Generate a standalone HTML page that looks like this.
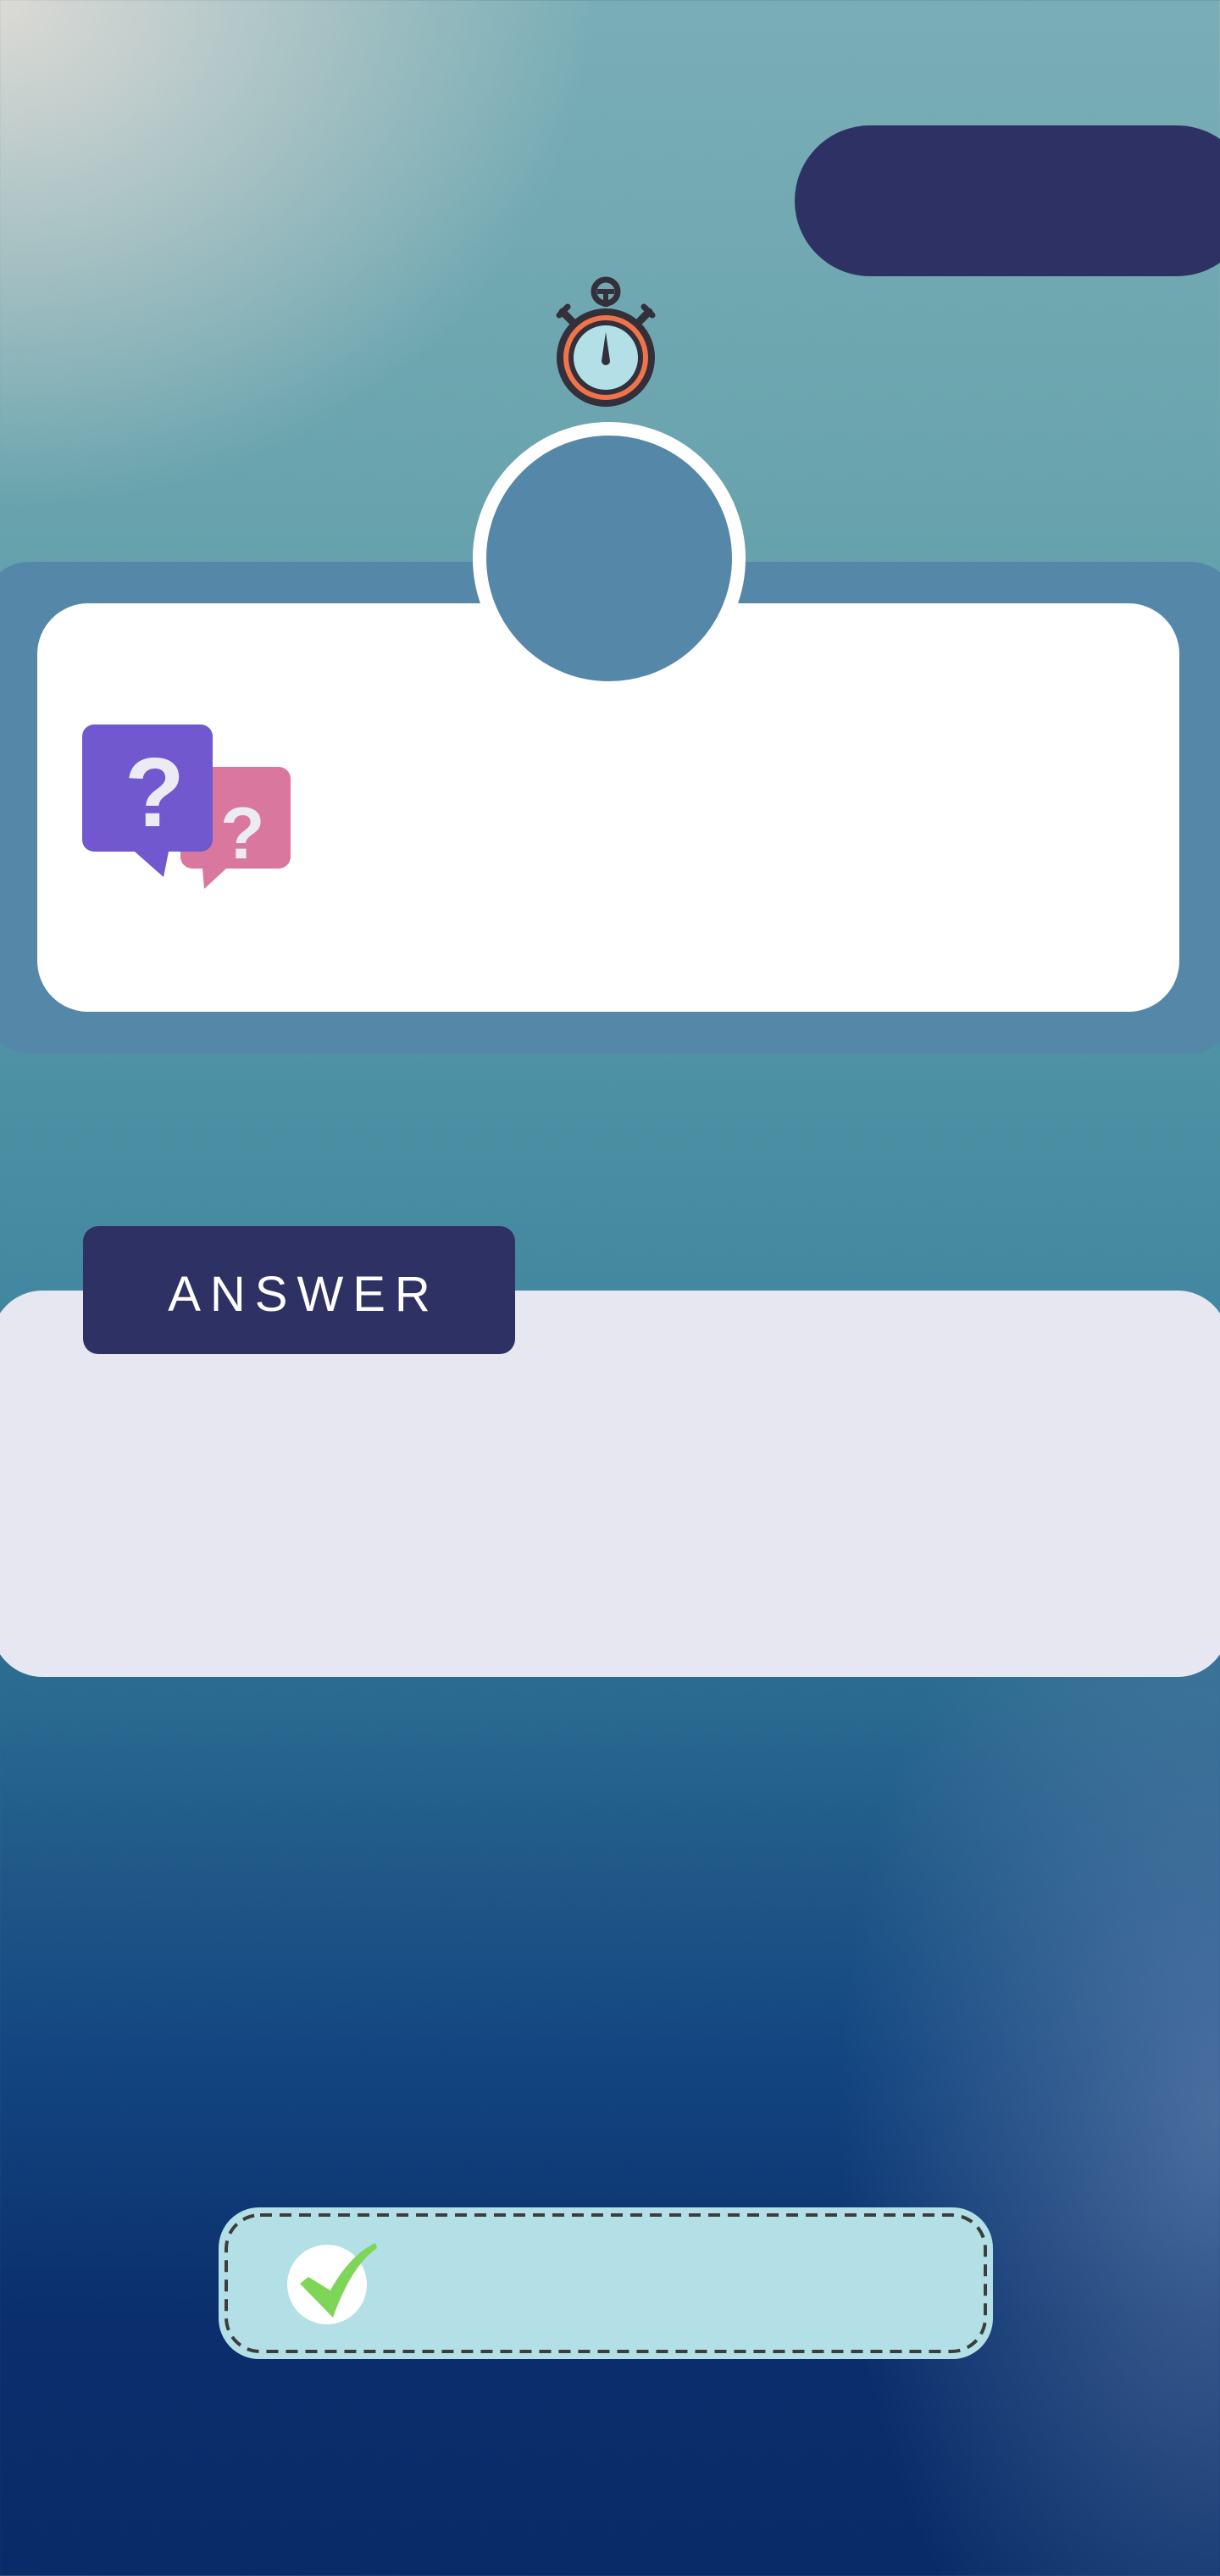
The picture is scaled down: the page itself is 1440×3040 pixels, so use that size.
<!DOCTYPE html>
<html><head><meta charset="utf-8"><style>
html,body{margin:0;padding:0}
body{width:1440px;height:3040px;position:relative;overflow:hidden;font-family:"Liberation Sans",sans-serif;
background:
radial-gradient(ellipse 700px 600px at 0px 0px, rgba(225,220,215,0.95), rgba(225,220,215,0) 100%),
radial-gradient(ellipse 450px 800px at 1440px 2500px, rgba(110,140,180,0.6), rgba(110,140,180,0) 100%),
linear-gradient(180deg,#7aaeb6 0%,#6aa4ae 18%,#5598a7 35%,#4388a0 50%,#2a6a90 66%,#134580 80%,#0a2f6c 90%,#092c68 100%);}
.a{position:absolute}
</style></head><body>
<div class="a" style="left:938px;top:148px;width:540px;height:178px;border-radius:89px;background:#2e3163"></div>
<svg class="a" style="left:650px;top:326px" width="130" height="160" viewBox="0 0 130 160">
<circle cx="65" cy="18" r="14" fill="none" stroke="#33303b" stroke-width="7"/>
<rect x="55" y="15" width="20" height="6" fill="#33303b"/><rect x="62" y="18" width="6" height="18" fill="#33303b"/>
<line x1="14" y1="42" x2="28" y2="56" stroke="#33303b" stroke-width="9" stroke-linecap="round"/>
<line x1="116" y1="42" x2="102" y2="56" stroke="#33303b" stroke-width="9" stroke-linecap="round"/>
<line x1="10" y1="46" x2="20" y2="36" stroke="#33303b" stroke-width="7" stroke-linecap="round"/>
<line x1="120" y1="46" x2="110" y2="36" stroke="#33303b" stroke-width="7" stroke-linecap="round"/>
<circle cx="65" cy="96" r="58" fill="#33303b"/>
<circle cx="65" cy="96" r="47" fill="none" stroke="#f0734a" stroke-width="6"/>
<circle cx="65" cy="96" r="38" fill="#b2e0e6"/>
<path d="M65 66 L70 100 A5 5 0 0 1 60 100 Z" fill="#33303b"/>
</svg>
<div class="a" style="left:-20px;top:663px;width:1480px;height:580px;border-radius:55px;background:#5587a8"></div>
<div class="a" style="left:44px;top:712px;width:1348px;height:482px;border-radius:60px;background:#fff"></div>
<div class="a" style="left:558px;top:498px;width:290px;height:290px;border-radius:50%;background:#5587a8;border:16px solid #fff"></div>
<svg class="a" style="left:97px;top:855px" width="260" height="200" viewBox="0 0 260 200">
<path d="M130 50 h102 a14 14 0 0 1 14 14 v92 a14 14 0 0 1 -14 14 h-62 l-26 24 l-2 -24 h-12 a14 14 0 0 1 -14 -14 v-92 a14 14 0 0 1 14 -14z" fill="#d9779e"/>
<text x="163" y="158" font-size="86" font-weight="bold" fill="#ecebf3" font-family="Liberation Sans">?</text>
<path d="M14 0 h126 a14 14 0 0 1 14 14 v122 a14 14 0 0 1 -14 14 h-38 l-6 30 l-34 -30 h-48 a14 14 0 0 1 -14 -14 v-122 a14 14 0 0 1 14 -14z" fill="#7158cf"/>
<text x="50" y="120" font-size="116" font-weight="bold" fill="#ecebf3" font-family="Liberation Sans">?</text>
</svg>
<div class="a" style="left:-10px;top:1523px;width:1460px;height:456px;border-radius:60px;background:#e6e7f1"></div>
<div class="a" style="left:98px;top:1447px;width:510px;height:151px;border-radius:18px;background:#2e3163;color:#fff;font-size:58px;letter-spacing:11px;line-height:162px;text-align:center;text-indent:11px">ANSWER</div>
<div class="a" style="left:258px;top:2605px;width:914px;height:179px;border-radius:48px;background:#b3e0e6"></div>
<svg class="a" style="left:258px;top:2605px" width="914" height="179"><rect x="9" y="9" width="896" height="161" rx="40" fill="none" stroke="#3d3d3d" stroke-width="4" stroke-dasharray="14 9"/></svg>
<div class="a" style="left:339px;top:2649px;width:94px;height:94px;border-radius:50%;background:#fff"></div>
<svg class="a" style="left:350px;top:2645px" width="100" height="90" viewBox="0 0 100 90"><path d="M4 50 L14 42 L40 58 C55 30 75 10 93 2 L95 8 C75 22 58 48 43 90 Z" fill="#7dd657"/></svg>
</body></html>
